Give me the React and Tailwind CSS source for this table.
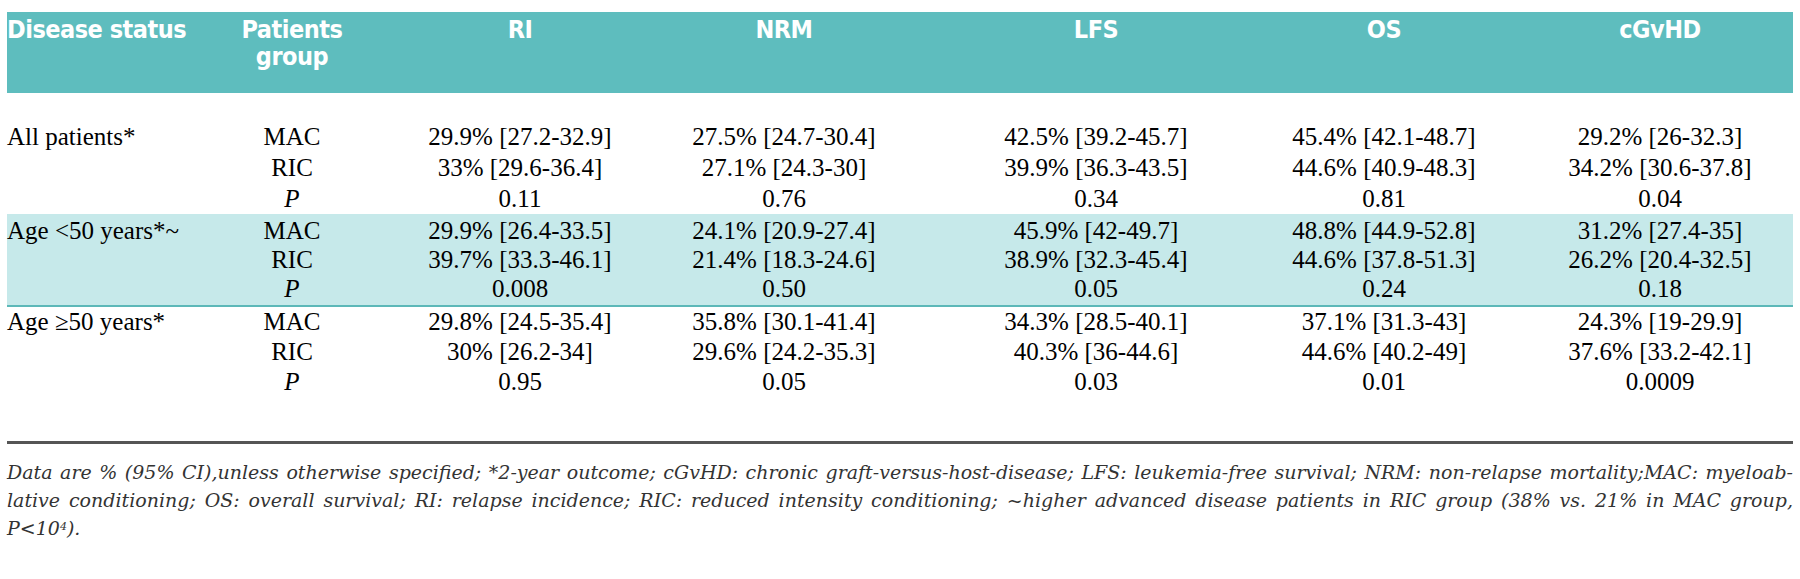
import React from 'react'

const cols = 'grid grid-cols-[154px_262px_194px_334px_290px_286px_266px]'
const head = "font-['Liberation_Sans_Narrow','DejaVu_Sans_Condensed','Liberation_Sans',sans-serif] font-bold text-white text-[25px] leading-[27px] tracking-[-0.5px]"
const body = "font-['Liberation_Serif',serif] text-black text-[25px]"

const groups = [
  {
    label: 'All patients*',
    band: false,
    rows: [
      ['MAC', '29.9% [27.2-32.9]', '27.5% [24.7-30.4]', '42.5% [39.2-45.7]', '45.4% [42.1-48.7]', '29.2% [26-32.3]'],
      ['RIC', '33% [29.6-36.4]', '27.1% [24.3-30]', '39.9% [36.3-43.5]', '44.6% [40.9-48.3]', '34.2% [30.6-37.8]'],
      ['P', '0.11', '0.76', '0.34', '0.81', '0.04'],
    ],
  },
  {
    label: 'Age <50 years*~',
    band: true,
    rows: [
      ['MAC', '29.9% [26.4-33.5]', '24.1% [20.9-27.4]', '45.9% [42-49.7]', '48.8% [44.9-52.8]', '31.2% [27.4-35]'],
      ['RIC', '39.7% [33.3-46.1]', '21.4% [18.3-24.6]', '38.9% [32.3-45.4]', '44.6% [37.8-51.3]', '26.2% [20.4-32.5]'],
      ['P', '0.008', '0.50', '0.05', '0.24', '0.18'],
    ],
  },
  {
    label: 'Age \u226550 years*',
    band: false,
    rows: [
      ['MAC', '29.8% [24.5-35.4]', '35.8% [30.1-41.4]', '34.3% [28.5-40.1]', '37.1% [31.3-43]', '24.3% [19-29.9]'],
      ['RIC', '30% [26.2-34]', '29.6% [24.2-35.3]', '40.3% [36-44.6]', '44.6% [40.2-49]', '37.6% [33.2-42.1]'],
      ['P', '0.95', '0.05', '0.03', '0.01', '0.0009'],
    ],
  },
]

function Group({ g, idx }) {
  const wrap =
    idx === 0
      ? 'pt-[28px]'
      : g.band
      ? 'bg-[#c6e9ea] border-b-2 border-[#5cb8b8] py-[2px]'
      : 'pt-0'
  const lead = idx === 0 ? 'leading-[31px]' : g.band ? 'leading-[29px]' : 'leading-[30px]'
  return (
    <div className={wrap}>
      {g.rows.map((r, i) => (
        <div key={i} className={`${cols} ${body} ${lead}`}>
          <div className="whitespace-nowrap">{i === 0 ? g.label : ''}</div>
          <div className={`text-center ${r[0] === 'P' ? 'italic' : ''}`}>{r[0]}</div>
          {r.slice(1).map((v, j) => (
            <div key={j} className="text-center whitespace-nowrap">{v}</div>
          ))}
        </div>
      ))}
    </div>
  )
}

export default function App() {
  return (
    <div className="w-[1800px] h-[579px] bg-white px-[7px] overflow-hidden">
      <div className="h-[12px] overflow-hidden flex flex-col">
        <p className="-mt-[30px] pl-[613px] font-['Liberation_Serif',serif] font-bold text-[26px] leading-[30px] text-black whitespace-nowrap">
          type of conditioning (MAC vs. RIC) by age group
        </p>
      </div>

      <div className={`${cols} ${head} bg-[#5ebdbe] h-[81px] pt-[4px]`}>
        <div className="whitespace-nowrap">Disease status</div>
        <div className="text-center">Patients<br />group</div>
        <div className="text-center">RI</div>
        <div className="text-center">NRM</div>
        <div className="text-center">LFS</div>
        <div className="text-center">OS</div>
        <div className="text-center">cGvHD</div>
      </div>

      {groups.map((g, i) => (
        <Group key={i} g={g} idx={i} />
      ))}

      <div className="mt-[44px] h-[3px] bg-[#555555]" />

      <div className="mt-[14px] font-['DejaVu_Serif',serif] italic text-[19px] leading-[28px] text-[#333333]">
        <p className="text-justify [text-align-last:justify] whitespace-nowrap">
          Data are % (95% CI),unless otherwise specified; *2-year outcome; cGvHD: chronic graft-versus-host-disease; LFS: leukemia-free survival; NRM: non-relapse mortality;MAC: myeloab-
        </p>
        <p className="text-justify [text-align-last:justify]">
          lative conditioning; OS: overall survival; RI: relapse incidence; RIC: reduced intensity conditioning; ~higher advanced disease patients in RIC group (38% vs. 21% in MAC group,
        </p>
        <p>
          P&lt;10<sup className="text-[11px]">4</sup>).
        </p>
      </div>
    </div>
  )
}
